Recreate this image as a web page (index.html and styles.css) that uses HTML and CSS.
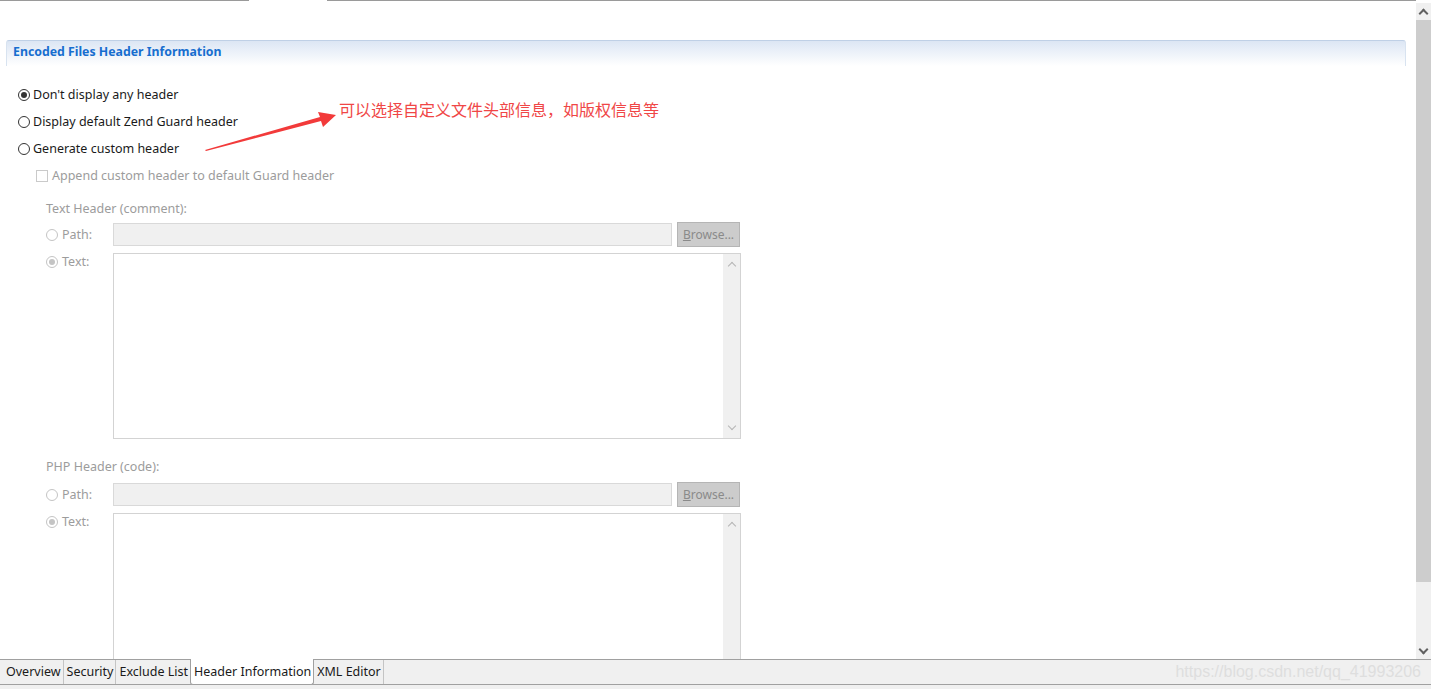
FILE: index.html
```html
<!DOCTYPE html>
<html lang="zh-CN">
<head>
  <meta charset="UTF-8" />
  <title>Header Information</title>
  <link rel="stylesheet" href="styles.css">
</head>
<body>
  <div class="topline">
    <div class="seg seg-left"></div>
    <div class="seg-gap"></div>
    <div class="seg seg-right"></div>
  </div>

  <div class="main">
    <div class="content">
      <div class="section-head">Encoded Files Header Information</div>

      <div class="options">
        <label class="opt"><span class="radio checked"></span>Don't display any header</label>
        <label class="opt"><span class="radio"></span>Display default Zend Guard header</label>
        <label class="opt"><span class="radio"></span>Generate custom header</label>
        <label class="opt sub disabled"><span class="check"></span>Append custom header to default Guard header</label>
      </div>

      <div class="group">
        <div class="group-title">Text Header (comment):</div>
        <div class="row">
          <label class="field-label"><span class="radio off"></span>Path:</label>
          <div class="path-input"></div>
          <div class="browse"><u>B</u>rowse...</div>
        </div>
        <div class="row">
          <label class="field-label top"><span class="radio off dot"></span>Text:</label>
          <div class="textarea">
            <div class="ta-scroll"><span class="chev up"></span><span class="chev down"></span></div>
          </div>
        </div>
      </div>

      <div class="group php">
        <div class="group-title">PHP Header (code):</div>
        <div class="row">
          <label class="field-label"><span class="radio off"></span>Path:</label>
          <div class="path-input"></div>
          <div class="browse"><u>B</u>rowse...</div>
        </div>
        <div class="row">
          <label class="field-label top"><span class="radio off dot"></span>Text:</label>
          <div class="textarea tall">
            <div class="ta-scroll"><span class="chev up"></span></div>
          </div>
        </div>
      </div>

      <!-- annotation drawn over the form -->
      <svg class="arrow" width="140" height="50" viewBox="200 105 140 50">
        <polygon points="205,150 320,117 318,112 336,115 323,127 321,121 206,151" fill="#f23a3a"/>
      </svg>
      <div class="note">可以选择自定义文件头部信息，如版权信息等</div>
    </div>

    <div class="vscroll">
      <div class="vs-btn"><span class="chev up dark"></span></div>
      <div class="vs-thumb"></div>
      <div class="vs-track"></div>
      <div class="vs-btn"><span class="chev down dark"></span></div>
    </div>
  </div>

  <div class="tabbar">
    <div class="tab">Overview</div>
    <div class="tab">Security</div>
    <div class="tab">Exclude List</div>
    <div class="tab active">Header Information</div>
    <div class="tab last">XML Editor</div>
    <div class="watermark">https://blog.csdn.net/qq_41993206</div>
  </div>
  <div class="bottom"></div>
</body>
</html>
```

FILE: styles.css
```css
body {
  margin: 0;
  background: #ffffff;
  font-family: "Noto Sans", "Noto Sans CJK SC", sans-serif;
  font-size: 12.5px;
  color: #1a1a1a;
  width: 1431px;
  height: 689px;
  overflow: hidden;
}

.topline {
  display: flex;
  height: 1px;
}

.seg {
  background: #9a9a9a;
}

.seg-left {
  width: 249px;
}

.seg-gap {
  width: 78px;
}

.seg-right {
  width: 1089px;
}

.main {
  display: flex;
  height: 658px;
}

.content {
  position: relative;
  flex: 1;
  overflow: hidden;
  padding: 39px 10px 0 6px;
}

/* section header */
.section-head {
  height: 25px;
  line-height: 22px;
  padding-left: 6px;
  border-top: 1px solid #bfd0e6;
  border-left: 1px solid #d8e3f0;
  border-right: 1px solid #d8e3f0;
  border-top-left-radius: 3px;
  border-top-right-radius: 3px;
  background: linear-gradient(to bottom, #dce6f4, #ffffff);
  font-weight: bold;
  font-size: 12.3px;
  color: #176ecf;
}

.options {
  display: flex;
  flex-direction: column;
  padding: 15px 0 0 12px;
}

.opt {
  display: flex;
  align-items: center;
  height: 27px;
  gap: 3px;
}

.opt.sub {
  padding-left: 18px;
}

.disabled {
  color: #9c9c9c;
}

.radio {
  display: inline-block;
  box-sizing: border-box;
  width: 12px;
  height: 12px;
  border: 1px solid #333;
  border-radius: 50%;
  background: #fff;
  position: relative;
}

.radio.checked::after,
.radio.dot::after {
  content: "";
  position: absolute;
  left: 2px;
  top: 2px;
  width: 6px;
  height: 6px;
  border-radius: 50%;
  background: #333;
}

.radio.off {
  border-color: #c4c4c4;
}

.radio.dot::after {
  background: #c4c4c4;
}

.check {
  display: inline-block;
  box-sizing: border-box;
  width: 12px;
  height: 12px;
  border: 1px solid #cacaca;
  margin-right: 1px;
}

/* text/php groups */
.group {
  padding-left: 40px;
  color: #9c9c9c;
}

.group-title {
  height: 20px;
  line-height: 20px;
  margin-top: 10px;
  margin-bottom: 3px;
}

.php .group-title {
  margin-top: 18px;
  margin-bottom: 5px;
}

.row {
  display: flex;
  align-items: center;
  margin-bottom: 6px;
}

.row:has(.top) {
  align-items: flex-start;
}

.field-label {
  display: flex;
  align-items: center;
  gap: 4px;
  width: 67px;
}

.path-input {
  box-sizing: border-box;
  width: 559px;
  height: 23px;
  background: #f0f0f0;
  border: 1px solid #d9d9d9;
}

.browse {
  box-sizing: border-box;
  margin-left: 5px;
  width: 63px;
  height: 25px;
  line-height: 23px;
  text-align: center;
  background: #cccccc;
  border: 1px solid #b5b5b5;
  color: #8a8a8a;
  font-size: 12px;
}

.textarea {
  box-sizing: border-box;
  width: 628px;
  height: 186px;
  border: 1px solid #d3d3d3;
  display: flex;
  justify-content: flex-end;
}

.textarea.tall {
  height: 200px;
}

.ta-scroll {
  width: 17px;
  background: #f0f0f0;
  display: flex;
  flex-direction: column;
  justify-content: space-between;
  align-items: center;
  padding: 6px 0;
}

.chev {
  display: block;
  width: 5px;
  height: 5px;
  border-left: 1.5px solid #b5b5b5;
  border-top: 1.5px solid #b5b5b5;
}

.chev.up {
  transform: rotate(45deg);
  margin-top: 3px;
}

.chev.down {
  transform: rotate(225deg);
  margin-bottom: 3px;
}

.chev.dark {
  border-color: #606060;
  border-width: 2px;
}

/* annotation */
.arrow {
  position: absolute;
  left: 200px;
  top: 104px;
}

.note {
  position: absolute;
  left: 339px;
  top: 96px;
  font-family: "Noto Sans CJK SC", sans-serif;
  font-size: 16px;
  color: #f04646;
}

/* right scrollbar */
.vscroll {
  width: 15px;
  margin-top: 2px;
  display: flex;
  flex-direction: column;
  background: #f0f0f0;
}

.vs-btn {
  height: 17px;
  display: flex;
  justify-content: center;
  align-items: center;
}

.vs-thumb {
  height: 562px;
  background: #cdcdcd;
}

.vs-track {
  flex: 1;
}

/* bottom tabs */
.tabbar {
  display: flex;
  align-items: stretch;
  height: 24px;
  border-top: 1px solid #a0a0a0;
  border-bottom: 1px solid #a0a0a0;
  background: #f0f0f0;
  padding-left: 3px;
}

.tab {
  padding: 0 2px 0 3px;
  line-height: 23px;
  border-left: 1px solid #c4c4c4;
  color: #1a1a1a;
}

.tab:first-child {
  border-left: none;
}

.tab.active {
  background: #fff;
  border-left: 1px solid #a0a0a0;
  border-right: 1px solid #a0a0a0;
  border-bottom: 1px solid #a0a0a0;
  border-bottom-left-radius: 3px;
  border-bottom-right-radius: 3px;
  margin-top: -1px;
  margin-bottom: -1px;
  padding-top: 1px;
}

.tab.active + .tab {
  border-left: none;
}

.tab.last {
  border-right: 1px solid #c4c4c4;
}

.watermark {
  margin-left: auto;
  padding-right: 10px;
  line-height: 24px;
  font-family: "Liberation Sans", Arial, sans-serif;
  font-size: 16px;
  color: #dedede;
}

.bottom {
  height: 4px;
  background: #f0f0f0;
}
```
